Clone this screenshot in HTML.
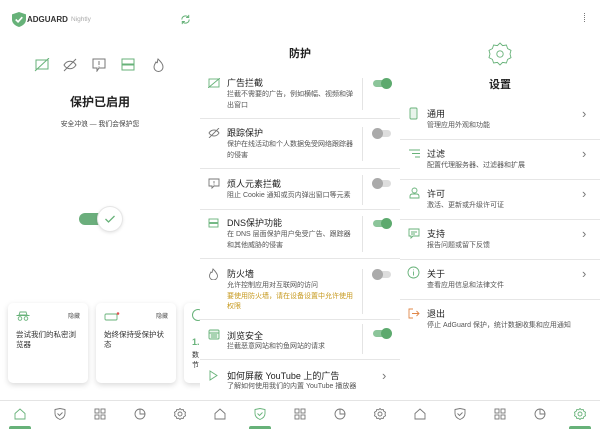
<!DOCTYPE html><html><head><meta charset="utf-8"><style>
*{margin:0;padding:0;box-sizing:border-box}
body{width:600px;height:429px;overflow:hidden;background:#fff;font-family:"Liberation Sans","Noto Sans CJK SC",sans-serif;color:#222;position:relative}
.p{position:absolute;top:0;width:200px;height:429px;overflow:hidden;background:#fff}
.a{position:absolute}
.nav{position:absolute;left:0;top:400px;width:200px;height:29px;border-top:1px solid #e4e4e4;background:#fff}
.ind{position:absolute;top:426px;width:22px;height:3px;background:#67b279;border-radius:2px 2px 0 0}
.row{position:absolute;left:0;width:200px;border-bottom:1px solid #e6e6e6}
.t{position:absolute;left:27px;font-size:9px;color:#222;line-height:12px}
.s{position:absolute;left:27px;font-size:7px;color:#555;line-height:10.5px;width:126px}
.vl{position:absolute;left:162px;width:1px;background:#e4e4e4}
.tg{position:absolute;left:173px;width:18px;height:7px;border-radius:4px}
.tg i{position:absolute;top:-2px;width:11px;height:11px;border-radius:50%}
.on{background:#8cc59a}.on i{right:-1px;background:#5daa6e}
.off{background:#ddd}.off i{left:-1px;background:#aaa}
.card{position:absolute;top:303px;width:80px;height:80px;background:#fff;border-radius:5px;box-shadow:0 2px 6px rgba(0,0,0,.15)}
.chev{position:absolute;left:182px;font-size:13px;color:#777;line-height:12px}
</style></head><body>

<!-- panel 1 -->
<div class="p" style="left:0">
 <svg class="a" style="left:12px;top:12px" width="14" height="15" viewBox="0 0 15 16"><path d="M7.5 0L15 2.5V8c0 4-3.5 7-7.5 8C3.5 15 0 12 0 8V2.5z" fill="#67b279"/><path d="M4 8l2.5 2.5L11 5.5" stroke="#fff" stroke-width="1.8" fill="none"/></svg>
 <div class="a" style="left:27px;top:15px;font-size:8px;font-weight:bold;color:#333">ADGUARD</div>
 <div class="a" style="left:71px;top:16px;font-size:6.5px;color:#aaa">Nightly</div>
 <svg class="a" style="left:180px;top:14px" width="11" height="11" viewBox="0 0 12 12"><path d="M2 6a4 4 0 0 1 7-2.6M10 6a4 4 0 0 1-7 2.6" stroke="#67b279" fill="none" stroke-width="1.1"/><path d="M9.5 1v2.8H6.7M2.5 11V8.2h2.8" stroke="#67b279" fill="none" stroke-width="1.1"/></svg>
 <svg class="a" style="left:34px;top:58px" width="140" height="14" viewBox="0 0 140 14" fill="none" stroke-width="1">
  <rect x="2" y="2" width="12" height="9" stroke="#67b279"/><path d="M1 13L15 0" stroke="#67b279"/>
  <path d="M30 7c3-5 9-5 12 0c-3 5-9 5-12 0z M30 13L42 1" stroke="#777"/>
  <path d="M59 1h12v9h-6l-2 3v-3h-4z M65 3v4M65 8.5v.8" stroke="#777"/>
  <rect x="88" y="1" width="12" height="5" stroke="#67b279"/><rect x="88" y="7" width="12" height="5" stroke="#67b279"/>
  <path d="M122 4c2 2 1 0 2-3c3 3 5 5 5 8a4.5 4.5 0 0 1-9 0c0-2 1-3 2-5z" stroke="#777"/>
 </svg>
 <div class="a" style="left:0;width:200px;top:93px;text-align:center;font-size:12px;font-weight:bold;color:#222">保护已启用</div>
 <div class="a" style="left:0;width:200px;top:118px;text-align:center;font-size:6.8px;color:#444">安全冲浪 — 我们会保护您</div>
 <div class="a" style="left:79px;top:213px;width:26px;height:12px;border-radius:6px;background:#6bae7c"></div>
 <div class="a" style="left:97px;top:206px;width:26px;height:26px;border-radius:50%;background:#fff;border:1px solid #e6e6e6;box-shadow:0 1px 3px rgba(0,0,0,.1)"></div>
 <svg class="a" style="left:104px;top:214px" width="12" height="10" viewBox="0 0 12 10"><path d="M1.5 5l3 3L10.5 2" stroke="#67b279" stroke-width="1.3" fill="none"/></svg>
 <div class="card" style="left:8px">
  <svg class="a" style="left:8px;top:8px" width="14" height="10" viewBox="0 0 14 10" fill="none" stroke="#67b279" stroke-width=".9"><path d="M3 4h8L10 1H4z M0.5 4.5h13"/><circle cx="4" cy="7.5" r="1.8"/><circle cx="10" cy="7.5" r="1.8"/></svg>
  <div class="a" style="left:60px;top:8px;font-size:6px;color:#555">隐藏</div>
  <div class="a" style="left:8px;top:27px;font-size:7.5px;line-height:10px;color:#333;width:62px">尝试我们的私密浏览器</div>
 </div>
 <div class="card" style="left:96px">
  <svg class="a" style="left:8px;top:9px" width="16" height="9" viewBox="0 0 16 9" fill="none" stroke="#67b279" stroke-width=".9"><rect x="1" y="2" width="12" height="6" rx="1"/><circle cx="14" cy="1.5" r="1.3" fill="#e05050" stroke="none"/></svg>
  <div class="a" style="left:60px;top:8px;font-size:6px;color:#555">隐藏</div>
  <div class="a" style="left:8px;top:27px;font-size:7.5px;line-height:10px;color:#333;width:62px">始终保持受保护状态</div>
 </div>
 <div class="card" style="left:184px">
  <div class="a" style="left:8px;top:6px;width:12px;height:12px;border:1px solid #67b279;border-radius:50%"></div>
  <div class="a" style="left:8px;top:34px;font-size:9px;color:#67b279;font-weight:bold">1.</div>
  <div class="a" style="left:8px;top:48px;font-size:7px;line-height:10px;color:#333">数<br>节</div>
 </div>
 <div class="nav"></div>
 <svg class="a" style="left:14px;top:408px" width="172" height="12" viewBox="0 0 172 12" fill="none" stroke="#777" stroke-width=".9">
  <path d="M1 5.5L6 1l5 4.5V11H1z" stroke="#67b279"/>
  <path d="M41 1.5l5-1 5 1v4c0 3-2.5 5-5 6c-2.5-1-5-3-5-6z M43.5 5.5l2 2 3-3" />
  <rect x="81" y="1" width="4" height="4"/><rect x="87" y="1" width="4" height="4"/><rect x="81" y="7" width="4" height="4"/><rect x="87" y="7" width="4" height="4"/>
  <circle cx="126" cy="6" r="5"/><path d="M126 1v5h5"/>
  <circle cx="166" cy="6" r="2"/><path d="M166 0.5l1.3 1.3 1.9-.3.6 1.8 1.7.9-.5 1.8.5 1.8-1.7.9-.6 1.8-1.9-.3L166 11.5l-1.3-1.3-1.9.3-.6-1.8-1.7-.9.5-1.8-.5-1.8 1.7-.9.6-1.8 1.9.3z"/>
 </svg>
 <div class="ind" style="left:9px"></div>
</div>

<!-- panel 2 -->
<div class="p" style="left:200px">
 <div class="a" style="left:0;width:200px;top:45px;text-align:center;font-size:11px;font-weight:bold">防护</div>
 <div class="row" style="top:70px;height:49px"><svg class="a" style="left:8px;top:8px" width="12" height="10" viewBox="0 0 12 10" fill="none" stroke="#67b279" stroke-width=".9"><rect x="1" y="1" width="10" height="8"/><path d="M0 10L12 0"/></svg><div class="t" style="top:7px">广告拦截</div><div class="s" style="top:20px">拦截不需要的广告，例如横幅、视频和弹出窗口</div><div class="vl" style="top:8px;height:32px"></div><div class="tg on" style="top:10px"><i></i></div></div>
 <div class="row" style="top:119px;height:50px"><svg class="a" style="left:8px;top:9px" width="12" height="10" viewBox="0 0 12 10" fill="none" stroke="#777" stroke-width=".9"><path d="M1 5c2.5-4 7.5-4 10 0c-2.5 4-7.5 4-10 0zM1 10L11 0"/></svg><div class="t" style="top:8px">跟踪保护</div><div class="s" style="top:21px">保护在线活动和个人数据免受网络跟踪器的侵害</div><div class="vl" style="top:8px;height:34px"></div><div class="tg off" style="top:11px"><i></i></div></div>
 <div class="row" style="top:169px;height:41px"><svg class="a" style="left:8px;top:9px" width="12" height="11" viewBox="0 0 12 11" fill="none" stroke="#777" stroke-width=".9"><path d="M1 1h10v7H6l-2 2V8H1zM6 3v2.5M6 6.5v.7"/></svg><div class="t" style="top:9px">烦人元素拦截</div><div class="s" style="top:22px;width:140px">阻止 Cookie 通知或页内弹出窗口等元素</div><div class="vl" style="top:6px;height:30px"></div><div class="tg off" style="top:11px"><i></i></div></div>
 <div class="row" style="top:210px;height:49px"><svg class="a" style="left:8px;top:8px" width="11" height="10" viewBox="0 0 11 10" fill="none" stroke="#67b279" stroke-width=".9"><rect x="1" y="1" width="9" height="3.5"/><rect x="1" y="5.5" width="9" height="3.5"/></svg><div class="t" style="top:7px">DNS保护功能</div><div class="s" style="top:20px">在 DNS 层面保护用户免受广告、跟踪器和其他威胁的侵害</div><div class="vl" style="top:6px;height:36px"></div><div class="tg on" style="top:10px"><i></i></div></div>
 <div class="row" style="top:259px;height:61px"><svg class="a" style="left:8px;top:9px" width="11" height="12" viewBox="0 0 11 12" fill="none" stroke="#777" stroke-width=".9"><path d="M3 4c1.5 1.5 1 0 2-3c3 3 4.5 5 4.5 7a4 4 0 0 1-8 0c0-2 1-3 1.5-4z"/></svg><div class="t" style="top:9px">防火墙</div><div class="s" style="top:22px">允许控制应用对互联网的访问<br><span style="color:#c79a1f">要使用防火墙，请在设备设置中允许使用权限</span></div><div class="vl" style="top:10px;height:45px"></div><div class="tg off" style="top:12px"><i></i></div></div>
 <div class="row" style="top:320px;height:40px"><svg class="a" style="left:8px;top:9px" width="12" height="11" viewBox="0 0 12 11" fill="none" stroke="#67b279" stroke-width=".9"><rect x="1" y="1" width="10" height="9" rx="1" fill="#e8f4eb"/><path d="M1 4h10M3 6h6M3 8h6"/></svg><div class="t" style="top:10px">浏览安全</div><div class="s" style="top:22px;width:140px">拦截恶意网站和钓鱼网站的请求</div><div class="vl" style="top:4px;height:30px"></div><div class="tg on" style="top:10px"><i></i></div></div>
 <div class="row" style="top:360px;height:40px;border:none"><svg class="a" style="left:9px;top:10px" width="9" height="11" viewBox="0 0 9 11" fill="none" stroke="#67b279" stroke-width=".9"><path d="M1 1l7 4.5L1 10z"/></svg><div class="t" style="top:10px">如何屏蔽 YouTube 上的广告</div><div class="s" style="top:22px;width:150px">了解如何使用我们的内置 YouTube 播放器</div><div class="chev" style="top:10px">›</div></div>
 <div class="nav"></div>
 <svg class="a" style="left:14px;top:408px" width="172" height="12" viewBox="0 0 172 12" fill="none" stroke="#777" stroke-width=".9">
  <path d="M1 5.5L6 1l5 4.5V11H1z"/>
  <path d="M41 1.5l5-1 5 1v4c0 3-2.5 5-5 6c-2.5-1-5-3-5-6z M43.5 5.5l2 2 3-3" stroke="#67b279"/>
  <rect x="81" y="1" width="4" height="4"/><rect x="87" y="1" width="4" height="4"/><rect x="81" y="7" width="4" height="4"/><rect x="87" y="7" width="4" height="4"/>
  <circle cx="126" cy="6" r="5"/><path d="M126 1v5h5"/>
  <circle cx="166" cy="6" r="2"/><path d="M166 0.5l1.3 1.3 1.9-.3.6 1.8 1.7.9-.5 1.8.5 1.8-1.7.9-.6 1.8-1.9-.3L166 11.5l-1.3-1.3-1.9.3-.6-1.8-1.7-.9.5-1.8-.5-1.8 1.7-.9.6-1.8 1.9.3z"/>
 </svg>
 <div class="ind" style="left:49px"></div>
</div>

<!-- panel 3 -->
<div class="p" style="left:400px">
 <div class="a" style="left:184px;top:13px;width:2px;height:9px;border-left:1.5px dotted #777"></div>
 <svg class="a" style="left:88px;top:42px" width="24" height="24" viewBox="0 0 12 12" fill="none" stroke="#67b279" stroke-width=".45"><circle cx="6" cy="6" r="1.6"/><path d="M6 0.5l1.3 1.3 1.9-.3.6 1.8 1.7.9-.5 1.8.5 1.8-1.7.9-.6 1.8-1.9-.3L6 11.5l-1.3-1.3-1.9.3-.6-1.8-1.7-.9.5-1.8-.5-1.8 1.7-.9.6-1.8 1.9.3z"/></svg>
 <div class="a" style="left:0;width:200px;top:76px;text-align:center;font-size:11px;font-weight:bold">设置</div>
 <div class="row" style="top:100px;height:40px"><svg class="a" style="left:9px;top:7px" width="9" height="13" viewBox="0 0 9 13" fill="none" stroke="#67b279" stroke-width=".9"><rect x="1" y="1" width="7" height="11" rx="1" fill="#e8f4eb"/></svg><div class="t" style="top:8px">通用</div><div class="s" style="top:21px">管理应用外观和功能</div><div class="chev" style="top:8px">›</div></div>
 <div class="row" style="top:140px;height:40px"><svg class="a" style="left:9px;top:9px" width="11" height="9" viewBox="0 0 11 9" fill="none" stroke="#67b279" stroke-width=".9"><path d="M0 1h11M3 4.5h8M6 8h5"/></svg><div class="t" style="top:8px">过滤</div><div class="s" style="top:21px">配置代理服务器、过滤器和扩展</div><div class="chev" style="top:8px">›</div></div>
 <div class="row" style="top:180px;height:40px"><svg class="a" style="left:9px;top:7px" width="11" height="12" viewBox="0 0 11 12" fill="none" stroke="#67b279" stroke-width=".9"><circle cx="5.5" cy="3.5" r="2.5"/><path d="M1 11v-1.5c0-1.5 1-2.5 2.5-2.5h4c1.5 0 2.5 1 2.5 2.5V11z"/></svg><div class="t" style="top:8px">许可</div><div class="s" style="top:21px">激活、更新或升级许可证</div><div class="chev" style="top:8px">›</div></div>
 <div class="row" style="top:220px;height:40px"><svg class="a" style="left:8px;top:8px" width="12" height="11" viewBox="0 0 12 11" fill="none" stroke="#67b279" stroke-width=".9"><path d="M1 1h10v7H5l-2 2V8H1z M3 4h6M3 6h4"/></svg><div class="t" style="top:8px">支持</div><div class="s" style="top:21px">报告问题或留下反馈</div><div class="chev" style="top:8px">›</div></div>
 <div class="row" style="top:260px;height:40px"><svg class="a" style="left:7px;top:6px" width="13" height="13" viewBox="0 0 13 13" fill="none" stroke="#67b279" stroke-width=".9"><circle cx="6.5" cy="6.5" r="5.5"/><path d="M6.5 5.5v4M6.5 3.5v.8"/></svg><div class="t" style="top:8px">关于</div><div class="s" style="top:21px">查看应用信息和法律文件</div><div class="chev" style="top:8px">›</div></div>
 <div class="row" style="top:300px;height:40px;border:none"><svg class="a" style="left:8px;top:8px" width="12" height="11" viewBox="0 0 12 11" fill="none" stroke="#e0884a" stroke-width=".9"><path d="M5 1H1v9h4M4 5.5h7M8.5 3l2.5 2.5L8.5 8"/></svg><div class="t" style="top:8px">退出</div><div class="s" style="top:21px;width:170px">停止 AdGuard 保护，统计数据收集和应用通知</div></div>
 <div class="nav"></div>
 <svg class="a" style="left:14px;top:408px" width="172" height="12" viewBox="0 0 172 12" fill="none" stroke="#777" stroke-width=".9">
  <path d="M1 5.5L6 1l5 4.5V11H1z"/>
  <path d="M41 1.5l5-1 5 1v4c0 3-2.5 5-5 6c-2.5-1-5-3-5-6z M43.5 5.5l2 2 3-3"/>
  <rect x="81" y="1" width="4" height="4"/><rect x="87" y="1" width="4" height="4"/><rect x="81" y="7" width="4" height="4"/><rect x="87" y="7" width="4" height="4"/>
  <circle cx="126" cy="6" r="5"/><path d="M126 1v5h5"/>
  <g stroke="#67b279"><circle cx="166" cy="6" r="2"/><path d="M166 0.5l1.3 1.3 1.9-.3.6 1.8 1.7.9-.5 1.8.5 1.8-1.7.9-.6 1.8-1.9-.3L166 11.5l-1.3-1.3-1.9.3-.6-1.8-1.7-.9.5-1.8-.5-1.8 1.7-.9.6-1.8 1.9.3z"/></g>
 </svg>
 <div class="ind" style="left:169px"></div>
</div>
</body></html>
